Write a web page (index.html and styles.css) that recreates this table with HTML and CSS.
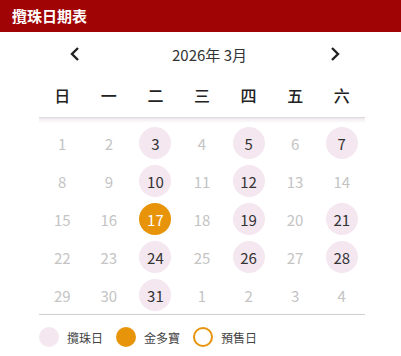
FILE: index.html
```html
<!DOCTYPE html>
<html lang="zh-Hant">
<head>
<meta charset="utf-8">
<link rel="stylesheet" href="styles.css">
</head>
<body>
<header class="bar">攬珠日期表</header>
<main class="cal">
  <div class="nav">
    <span class="chev"><svg width="12" height="16" viewBox="0 0 12 16"><path d="M9 2 L3 8 L9 14" fill="none" stroke="#222" stroke-width="2.4"/></svg></span>
    <span class="month">2026年 3月</span>
    <span class="chev"><svg width="12" height="16" viewBox="0 0 12 16"><path d="M3 2 L9 8 L3 14" fill="none" stroke="#222" stroke-width="2.4"/></svg></span>
  </div>
  <div class="week">
    <span>日</span><span>一</span><span>二</span><span>三</span><span>四</span><span>五</span><span>六</span>
  </div>
  <div class="days">
    <span class="d">1</span><span class="d">2</span><span class="d draw">3</span><span class="d">4</span><span class="d draw">5</span><span class="d">6</span><span class="d draw">7</span>
    <span class="d">8</span><span class="d">9</span><span class="d draw">10</span><span class="d">11</span><span class="d draw">12</span><span class="d">13</span><span class="d">14</span>
    <span class="d">15</span><span class="d">16</span><span class="d gold">17</span><span class="d">18</span><span class="d draw">19</span><span class="d">20</span><span class="d draw">21</span>
    <span class="d">22</span><span class="d">23</span><span class="d draw">24</span><span class="d">25</span><span class="d draw">26</span><span class="d">27</span><span class="d draw">28</span>
    <span class="d">29</span><span class="d">30</span><span class="d draw">31</span><span class="d">1</span><span class="d">2</span><span class="d">3</span><span class="d">4</span>
  </div>
  <div class="legend">
    <span class="dot dot-draw"></span><span class="lbl">攬珠日</span>
    <span class="dot dot-gold"></span><span class="lbl">金多寶</span>
    <span class="dot dot-pre"></span><span class="lbl">預售日</span>
  </div>
</main>
</body>
</html>
```
FILE: styles.css
```css
* { box-sizing: border-box; }
body {
  margin: 0;
  background: #fff;
  font-family: "Noto Sans CJK TC", "Noto Sans", sans-serif;
  color: #333;
}
.bar {
  height: 32px;
  background: #a00404;
  color: #fff;
  font-weight: 700;
  font-size: 15px;
  line-height: 32px;
  padding-left: 12px;
}
.cal {
  width: 326px;
  margin-left: 39px;
}
.nav {
  display: flex;
  align-items: center;
  justify-content: space-between;
  height: 44px;
  padding: 0 24px 0 30px;
}
.chev { display: flex; align-items: center; }
.month {
  font-size: 15px;
  color: #333;
  margin-left: 9px;
}
.week {
  display: grid;
  grid-template-columns: repeat(7, 1fr);
  height: 42px;
  padding-bottom: 4px;
  align-items: center;
  font-size: 16px;
  font-weight: 500;
  color: #222;
  text-align: center;
  border-bottom: 1px solid #dcdcdc;
}
.days {
  display: grid;
  grid-template-columns: repeat(7, 1fr);
  grid-auto-rows: 38px;
  align-items: center;
  justify-items: center;
  padding-top: 6px;
  border-bottom: 1px solid #cfcfcf;
  background: linear-gradient(#efe6ee, #fff 5px) top / 100% 5px no-repeat;
}
.d {
  width: 32px;
  height: 32px;
  border-radius: 50%;
  display: flex;
  align-items: center;
  justify-content: center;
  font-size: 15px;
  color: #c4c4c4;
}
.draw { background: #f4e7f0; color: #333; }
.gold { background: #e8940a; color: #fff; }
.legend {
  display: flex;
  align-items: center;
  height: 44px;
  font-size: 12px;
  color: #444;
}
.dot {
  width: 20px;
  height: 20px;
  border-radius: 50%;
  margin-right: 8px;
}
.dot-draw { background: #f4e7f0; }
.dot-gold { background: #e8940a; }
.dot-pre { border: 2px solid #e8940a; }
.lbl { margin-right: 13px; }
```
